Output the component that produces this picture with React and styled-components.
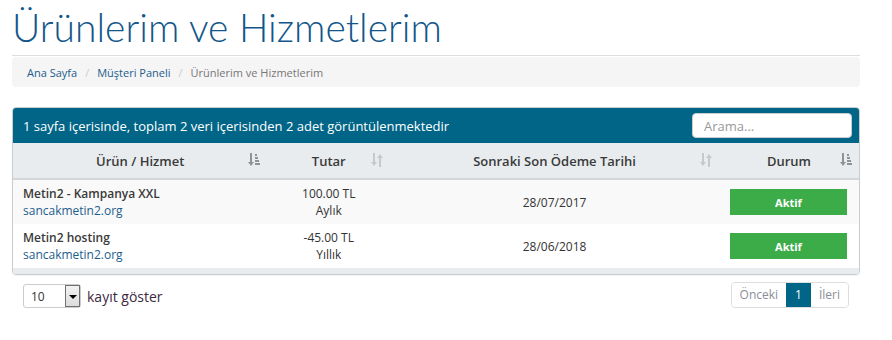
import React from 'react'
import styled, { createGlobalStyle } from 'styled-components'

const GlobalStyle = createGlobalStyle`
  body {
    margin: 0;
    font-family: "Open Sans", "DejaVu Sans", sans-serif;
    color: #333;
    background: #fff;
  }
`;

const rows = [
  { name: 'Metin2 - Kampanya XXL', domain: 'sancakmetin2.org', price: '100.00 TL', cycle: 'Aylık', due: '28/07/2017', status: 'Aktif' },
  { name: 'Metin2 hosting', domain: 'sancakmetin2.org', price: '-45.00 TL', cycle: 'Yıllık', due: '28/06/2018', status: 'Aktif' },
];

const columns = [
  { label: 'Ürün / Hizmet', icon: 'amount', width: 255 },
  { label: 'Tutar', icon: 'both', width: 123 },
  { label: 'Sonraki Son Ödeme Tarihi', icon: 'both', width: 330 },
  { label: 'Durum', icon: 'amount', width: 140 },
];

function SortIcon({ type }) {
  if (type === 'amount') {
    return (
      <svg width="12" height="14" viewBox="0 0 12 14">
        <g fill="#8f9397">
          <rect x="2" y="0" width="2" height="10" />
          <path d="M0 9h6l-3 4z" />
          <rect x="7" y="1" width="2" height="2" />
          <rect x="7" y="4" width="3" height="2" />
          <rect x="7" y="7" width="4" height="2" />
          <rect x="7" y="10" width="5" height="2" />
        </g>
      </svg>
    )
  }
  return (
    <svg width="12" height="14" viewBox="0 0 12 14">
      <g fill="#c6c9cc">
        <rect x="2" y="0" width="2" height="10" />
        <path d="M0 9h6l-3 4z" />
        <rect x="8" y="4" width="2" height="10" />
        <path d="M6 5h6l-3-4z" />
      </g>
    </svg>
  )
}

function App() {
  return (
    <Page>
      <GlobalStyle />
      <Title>Ürünlerim ve Hizmetlerim</Title>
      <Breadcrumb>
        <Crumb href="#">Ana Sayfa</Crumb>
        <Sep>/</Sep>
        <Crumb href="#">Müşteri Paneli</Crumb>
        <Sep>/</Sep>
        <Current>Ürünlerim ve Hizmetlerim</Current>
      </Breadcrumb>

      <Panel>
        <PanelHead>
          <span>1 sayfa içerisinde, toplam 2 veri içerisinden 2 adet görüntülenmektedir</span>
          <Search placeholder="Arama..." />
        </PanelHead>
        <Table>
          <thead>
            <tr>
              {columns.map((c) => (
                <Th key={c.label} style={{ width: c.width }}>
                  {c.label}
                  <IconSpot><SortIcon type={c.icon} /></IconSpot>
                </Th>
              ))}
            </tr>
          </thead>
          <tbody>
            {rows.map((r, i) => (
              <Row key={r.name} $striped={i % 2 === 0}>
                <NameCell>
                  <strong>{r.name}</strong>
                  <Domain href="#">{r.domain}</Domain>
                </NameCell>
                <Td>{r.price}<br />{r.cycle}</Td>
                <Td>{r.due}</Td>
                <Td><Status>{r.status}</Status></Td>
              </Row>
            ))}
          </tbody>
        </Table>
        <PanelFoot />
      </Panel>

      <Bottom>
        <Length>
          <Select>
            <span>10</span>
            <Arrow />
          </Select>
          kayıt göster
        </Length>
        <Pager>
          <PageItem>Önceki</PageItem>
          <PageItem $active>1</PageItem>
          <PageItem>İleri</PageItem>
        </Pager>
      </Bottom>
    </Page>
  )
}

const Page = styled.div`
  width: 848px;
  padding: 0 12px;
`;

const Title = styled.h1`
  margin: 0;
  padding: 6px 0 7px;
  font-family: "Lato", "Open Sans", sans-serif;
  font-weight: 300;
  font-size: 39px;
  line-height: 42px;
  color: #12568a;
  border-bottom: 1px solid #ddd;
`;

const Breadcrumb = styled.div`
  margin-top: 1px;
  height: 30px;
  display: flex;
  align-items: center;
  padding: 0 15px;
  background: #f5f5f5;
  border-radius: 4px;
  font-size: 11px;
`;

const Crumb = styled.a`
  color: #1e5d8c;
  text-decoration: none;
`;

const Sep = styled.span`
  color: #ccc;
  padding: 0 8px;
`;

const Current = styled.span`
  color: #777;
`;

const Panel = styled.div`
  margin-top: 20px;
  border: 1px solid #c9ccce;
  border-radius: 4px;
  overflow: hidden;
  box-shadow: 0 1px 1px rgba(0, 0, 0, 0.05);
`;

const PanelHead = styled.div`
  height: 35px;
  background: #006587;
  display: flex;
  align-items: center;
  justify-content: space-between;
  padding: 0 7px 0 10px;
  color: #fff;
  font-size: 13px;
`;

const Search = styled.input`
  width: 160px;
  height: 25px;
  box-sizing: border-box;
  border: 1px solid #ccc;
  border-radius: 4px;
  padding: 0 11px;
  font-family: inherit;
  font-size: 13px;
  color: #555;
  &::placeholder { color: #999; }
`;

const Table = styled.table`
  width: 100%;
  border-collapse: collapse;
  font-size: 12px;
`;

const Th = styled.th`
  position: relative;
  height: 35px;
  padding: 0;
  background: #e8ecef;
  border-bottom: 2px solid #d4d7d9;
  font-weight: 600;
  font-size: 13px;
  color: #3a3a3a;
  text-align: center;
`;

const IconSpot = styled.span`
  position: absolute;
  right: 7px;
  top: 10px;
  line-height: 0;
`;

const Row = styled.tr`
  background: ${(p) => (p.$striped ? '#f9f9f9' : '#fff')};
  & + & td { border-top: 1px solid #ddd; }
`;

const Td = styled.td`
  height: 44px;
  padding: 0 10px;
  text-align: center;
  line-height: 17px;
  color: #333;
`;

const NameCell = styled(Td)`
  text-align: left;
  strong {
    display: block;
    font-weight: 600;
    color: #3a3a3a;
  }
`;

const Domain = styled.a`
  color: #1e5d8c;
  text-decoration: none;
`;

const Status = styled.div`
  width: 117px;
  height: 26px;
  margin-left: 1px;
  background: #3cac49;
  color: #fff;
  font-weight: 700;
  font-size: 11px;
  display: flex;
  align-items: center;
  justify-content: center;
`;

const PanelFoot = styled.div`
  height: 6px;
  background: #e8ecef;
`;

const Bottom = styled.div`
  display: flex;
  justify-content: space-between;
  align-items: center;
  padding: 6px 11px 0;
`;

const Length = styled.div`
  display: flex;
  align-items: center;
  gap: 6px;
  font-size: 14px;
  color: #3d2a3f;
  margin-top: 3px;
`;

const Select = styled.div`
  width: 58px;
  height: 24px;
  box-sizing: border-box;
  border: 1px solid #ccc;
  border-radius: 3px;
  display: flex;
  align-items: center;
  justify-content: space-between;
  padding-left: 7px;
  font-size: 12px;
  color: #333;
`;

const Arrow = styled.span`
  width: 15px;
  height: 22px;
  box-sizing: border-box;
  border: 1px solid #707070;
  background: linear-gradient(#f2f2f2, #dcdcdc);
  position: relative;
  &::after {
    content: '';
    position: absolute;
    left: 3px;
    top: 9px;
    border-left: 4px solid transparent;
    border-right: 4px solid transparent;
    border-top: 4px solid #000;
  }
`;

const Pager = styled.div`
  display: flex;
  border: 1px solid #ddd;
  border-radius: 4px;
  overflow: hidden;
`;

const PageItem = styled.span`
  height: 24px;
  padding: 0 8px;
  display: flex;
  align-items: center;
  font-size: 12px;
  color: ${(p) => (p.$active ? '#fff' : '#8a8f96')};
  background: ${(p) => (p.$active ? '#006587' : '#fff')};
  & + & { border-left: 1px solid ${(p) => (p.$active ? '#006587' : '#ddd')}; }
`;

export default App
